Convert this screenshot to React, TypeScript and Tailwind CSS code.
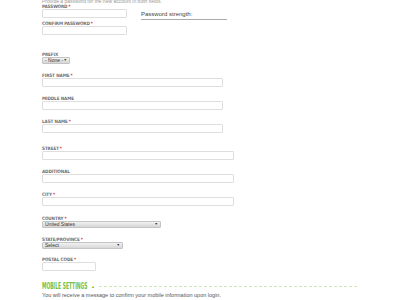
const labelCls =
  "block h-[5px] text-[4.6px] leading-[5px] font-bold uppercase text-[#707070] tracking-[-0.1px]";
const inputCls = "block h-[9px] border border-[#dedede] rounded-[1px] bg-white";
const condensed = '"DejaVu Sans Condensed", "Liberation Sans Narrow", "Liberation Sans", sans-serif';

function Label({ text, required }: { text: string; required?: boolean }) {
  return (
    <span className={labelCls} style={{ fontFamily: condensed }}>
      {text}
      {required && <span className="text-[#e0302a] ml-[1px]">*</span>}
    </span>
  );
}

function Field({ text, required, w, mt }: { text: string; required?: boolean; w: string; mt: string }) {
  return (
    <div className={mt}>
      <Label text={text} required={required} />
      <div className={`${inputCls} ${w}`} />
    </div>
  );
}

function Select({ value, w }: { value: string; w: string }) {
  return (
    <div
      className={`flex items-center justify-between ${w} h-[7px] border border-[#c4c4c4] rounded-[1px] bg-gradient-to-b from-[#f2f2f2] to-[#d6d6d6] px-[2px] text-[5px] text-[#333]`}
    >
      <span>{value}</span>
      <span className="text-[3.5px] text-[#333]">▼</span>
    </div>
  );
}

export default function App() {
  return (
    <div
      className="w-[400px] h-[300px] overflow-hidden bg-white pl-[42px]"
      style={{ fontFamily: '"Liberation Sans", Arial, sans-serif' }}
    >
      <p className="mt-[-2px] h-[6px] text-[5px] leading-[6px] text-[#999]">
        Provide a password for the new account in both fields.
      </p>

      {/* password row */}
      <div className="flex">
        <div className="w-[85px]">
          <Field text="Password" required w="w-[85px]" mt="mt-0" />
          <Field text="Confirm password" required w="w-[85px]" mt="mt-[3px]" />
        </div>
        <div className="ml-[14px] mt-[6px] w-[86px] h-[10px] border-b-[1.5px] border-[#aaa] text-[6px] leading-[8px] text-[#444]">
          Password strength:
        </div>
      </div>

      <div className="mt-[17px]">
        <Label text="Prefix" />
        <Select value="- None -" w="w-[28px]" />
      </div>

      <Field text="First name" required w="w-[181px]" mt="mt-[9px]" />
      <Field text="Middle name" w="w-[181px]" mt="mt-[9px]" />
      <Field text="Last name" required w="w-[181px]" mt="mt-[9px]" />

      <Field text="Street" required w="w-[192px]" mt="mt-[13px]" />
      <Field text="Additional" w="w-[192px]" mt="mt-[9px]" />
      <Field text="City" required w="w-[192px]" mt="mt-[9px]" />

      <div className="mt-[10px]">
        <Label text="Country" required />
        <Select value="United States" w="w-[119px]" />
      </div>
      <div className="mt-[9px]">
        <Label text="State/Province" required />
        <Select value="Select" w="w-[81px]" />
      </div>
      <Field text="Postal code" required w="w-[54px]" mt="mt-[8px]" />

      <div className="mt-[11px] flex items-center w-[315px] h-[9px] leading-[9px]">
        <div className="w-[47px] h-[9px] leading-[9px] overflow-hidden">
          <span
            className="inline-block align-top origin-left scale-x-[0.55] whitespace-nowrap text-[9px] leading-[9px] font-bold uppercase text-[#74c043]"
            style={{ fontFamily: condensed }}
          >
            Mobile Settings
          </span>
        </div>
        <span className="ml-[2px] text-[4px] leading-[8px] text-[#74c043]">▲</span>
        <div className="ml-[4px] flex-1 border-t border-dashed border-[#cfe9b6]" />
      </div>
      <p className="mt-[1px] text-[5.5px] leading-[6px] text-[#555]">
        You will receive a message to confirm your mobile information upon login.
      </p>
    </div>
  );
}
